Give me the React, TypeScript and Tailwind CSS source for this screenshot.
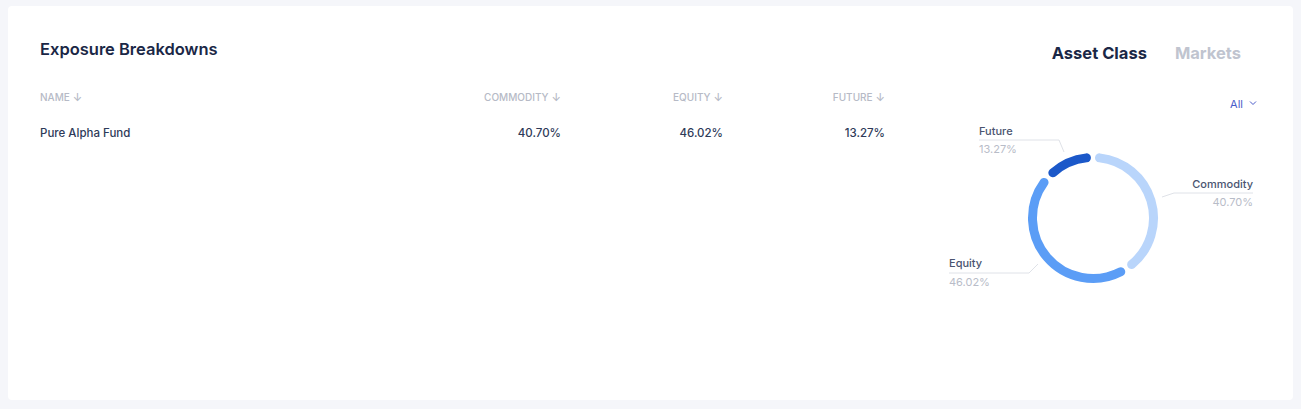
import React from "react";

const font = { fontFamily: "Inter, 'Noto Sans', sans-serif" };

const rows = [{ name: "Pure Alpha Fund", commodity: "40.70%", equity: "46.02%", future: "13.27%" }];

const segments = [
    { label: "Commodity", value: 40.7, color: "#b9d5fb" },
    { label: "Equity", value: 46.02, color: "#5b9df6" },
    { label: "Future", value: 13.27, color: "#1b58c9" },
];

const CX = 208;
const CY = 106;
const R = 60.5;
const GAP = 6.2;

function pt(deg: number) {
    const a = (deg * Math.PI) / 180;
    return [CX + R * Math.sin(a), CY - R * Math.cos(a)];
}

function arc(from: number, to: number) {
    const [x1, y1] = pt(from + GAP);
    const [x2, y2] = pt(to - GAP);
    const large = to - from - 2 * GAP > 180 ? 1 : 0;
    return `M${x1.toFixed(2)} ${y1.toFixed(2)} A${R} ${R} 0 ${large} 1 ${x2.toFixed(2)} ${y2.toFixed(2)}`;
}

const Donut = () => {
    let start = 0;
    return (
        <svg width="372" height="190" viewBox="0 0 372 190" className="block">
            {segments.map((s) => {
                const end = start + (s.value / 100) * 360;
                const d = arc(start, end);
                start = end;
                return <path key={s.label} d={d} fill="none" stroke={s.color} strokeWidth={9} strokeLinecap="round" />;
            })}

            {/* leader lines */}
            <polyline points="94,28 174,28 179,40" fill="none" stroke="#dfe2e8" strokeWidth={1} />
            <polyline points="368,81 289,81 277,85" fill="none" stroke="#dfe2e8" strokeWidth={1} />
            <polyline points="64,161 144,161 153,152" fill="none" stroke="#dfe2e8" strokeWidth={1} />

            <g style={font} fontSize="11" fontWeight={500}>
                <text x="94" y="23" fill="#4a5470">Future</text>
                <text x="94" y="41" fill="#b8bcc8" fontWeight={400}>13.27%</text>
                <text x="368" y="76" fill="#4a5470" textAnchor="end">Commodity</text>
                <text x="368" y="94" fill="#b8bcc8" textAnchor="end" fontWeight={400}>40.70%</text>
                <text x="64" y="155" fill="#4a5470">Equity</text>
                <text x="64" y="174" fill="#b8bcc8" fontWeight={400}>46.02%</text>
            </g>
        </svg>
    );
};

const Th = ({ label }: { label: string }) => (
    <div className="w-[162px] flex items-center justify-end gap-[3px]">
        <span>{label}</span>
        <span className="text-[11px] leading-none">↓</span>
    </div>
);

const App = () => {
    return (
        <div className="w-full h-[409px] bg-[#f5f6fa] pt-[6px] px-[8px] pb-[9px]" style={font}>
            <div className="h-full bg-white rounded-[4px] flex pl-[32px] pr-[36px]">
                <div className="w-[846px] pt-[31px]">
                    <div className="text-[16.5px] leading-6 font-semibold text-[#1a2746]">
                        Exposure Breakdowns
                    </div>

                    <div className="mt-[29px] flex text-[10px] leading-[14px] text-[#b6bac6] font-medium uppercase">
                        <div className="flex-1 flex items-center gap-[3px]">
                            <span>Name</span>
                            <span className="text-[11px] leading-none">↓</span>
                        </div>
                        <Th label="Commodity" />
                        <Th label="Equity" />
                        <Th label="Future" />
                    </div>

                    {rows.map((r) => (
                        <div key={r.name} className="mt-[21px] flex text-[11.5px] leading-4 font-medium text-[#2e3a59]">
                            <div className="flex-1">{r.name}</div>
                            <div className="w-[162px] text-right">{r.commodity}</div>
                            <div className="w-[162px] text-right">{r.equity}</div>
                            <div className="w-[162px] text-right">{r.future}</div>
                        </div>
                    ))}
                </div>

                <div className="flex-1 pt-[35px] flex flex-col">
                    <div className="flex justify-end gap-[28px] pr-[16px] text-[16.5px] leading-6 font-bold">
                        <span className="text-[#1a2746]">Asset Class</span>
                        <span className="text-[#c0c4cf]">Markets</span>
                    </div>
                    <div className="mt-[31px] flex justify-end items-center gap-[6px] text-[11px] leading-4 text-[#4a5bc9]">
                        <span>All</span>
                        <svg width="8" height="8" viewBox="0 0 8 8" className="mb-[2px]">
                            <path d="M1 2.5 L4 5.5 L7 2.5" fill="none" stroke="#4a5bc9" strokeWidth="1" />
                        </svg>
                    </div>
                    <div className="flex justify-end">
                        <Donut />
                    </div>
                </div>
            </div>
        </div>
    );
};

export default App;
